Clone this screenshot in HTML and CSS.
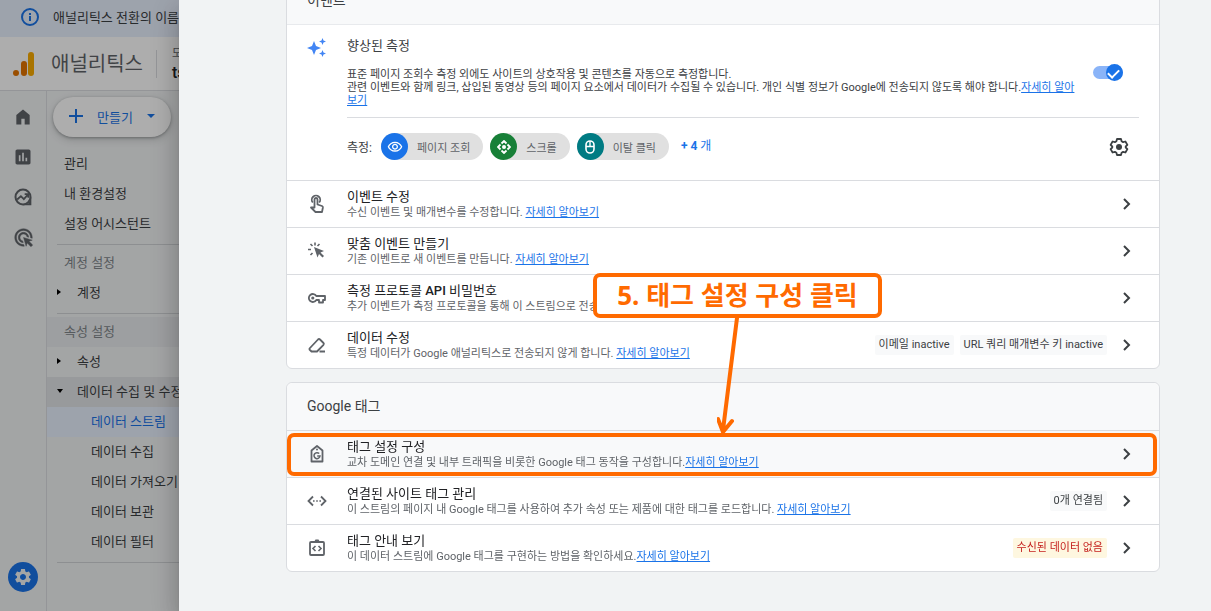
FILE: index.html
```html
<!DOCTYPE html>
<html lang="ko">
<head>
  <meta charset="UTF-8">
  <meta name="viewport" content="width=device-width, initial-scale=1">
  <title>애널리틱스</title>
  <link rel="stylesheet" href="styles.css">
</head>
<body>

  <svg class="defs" width="0" height="0" aria-hidden="true">
    <symbol id="chevron" viewBox="0 0 20 20">
      <path d="M7 5l5 5-5 5" fill="none" stroke="currentColor" stroke-width="2"/>
    </symbol>
    <symbol id="gear" viewBox="0 0 24 24">
      <path fill="currentColor" d="M19.14 12.94c.04-.3.06-.61.06-.94 0-.32-.02-.64-.07-.94l2.03-1.58c.18-.14.23-.41.12-.61l-1.92-3.32c-.12-.22-.37-.29-.59-.22l-2.39.96c-.5-.38-1.03-.7-1.62-.94l-.36-2.54c-.04-.24-.24-.41-.48-.41h-3.84c-.24 0-.43.17-.47.41l-.36 2.54c-.59.24-1.13.57-1.62.94l-2.39-.96c-.22-.08-.47 0-.59.22L2.74 8.87c-.12.21-.08.47.12.61l2.03 1.58c-.05.3-.09.63-.09.94s.02.64.07.94l-2.03 1.58c-.18.14-.23.41-.12.61l1.92 3.32c.12.22.37.29.59.22l2.39-.96c.5.38 1.03.7 1.62.94l.36 2.54c.05.24.24.41.48.41h3.84c.24 0 .44-.17.47-.41l.36-2.54c.59-.24 1.13-.56 1.62-.94l2.39.96c.22.08.47 0 .59-.22l1.92-3.32c.12-.22.07-.47-.12-.61l-2.01-1.58zM12 15.6c-1.98 0-3.6-1.62-3.6-3.6s1.62-3.6 3.6-3.6 3.6 1.62 3.6 3.6-1.62 3.6-3.6 3.6z"/>
    </symbol>
  </svg>

  <div class="app">
    <div class="banner">
      <svg width="18" height="18" viewBox="0 0 18 18"><circle cx="9" cy="9" r="8" fill="none" stroke="#1a73e8" stroke-width="2"/><path d="M8 8h2v5H8zM8 5h2v2H8z" fill="#1a73e8"/></svg>
      <span>애널리틱스 전환의 이름이 변경되었습니다</span>
    </div>

    <header class="topbar">
      <svg width="22" height="26" viewBox="0 0 22 26">
        <rect x="15" y="1" width="6" height="24" rx="3" fill="#f9ab00"/>
        <rect x="8" y="10" width="6" height="15" rx="3" fill="#e37400"/>
        <circle cx="3" cy="22" r="3" fill="#e37400"/>
      </svg>
      <span class="brand">애널리틱스</span>
      <div class="account">
        <small>모든 계정</small>
        <strong>tsmarketing</strong>
      </div>
    </header>

    <div class="main">
      <nav class="rail" aria-label="주 메뉴">
        <a href="#" aria-label="홈"><svg width="20" height="20" viewBox="0 0 24 24"><path fill="currentColor" d="M4 21V9.500l8-6.500 8 6.500V21h-6v-7h-4v7z"/></svg></a>
        <a href="#" aria-label="보고서"><svg width="20" height="20" viewBox="0 0 24 24"><path fill="currentColor" d="M19 3H5c-1.100 0-2 .9-2 2v14c0 1.100.9 2 2 2h14c1.100 0 2-.9 2-2V5c0-1.100-.9-2-2-2zM9 17H7v-7h2v7zm4 0h-2V7h2v10zm4 0h-2v-4h2v4z"/></svg></a>
        <a href="#" aria-label="탐색"><svg width="20" height="20" viewBox="0 0 24 24"><path fill="currentColor" d="M14 20h8v2H12z M22 12v10h-5l3-5z"/><circle cx="12" cy="12" r="9" fill="none" stroke="currentColor" stroke-width="2.400"/><path d="M5 15l4.500-4 3.500 3.500L18 9M14 8.500h4.500V13" fill="none" stroke="currentColor" stroke-width="2.200"/></svg></a>
        <a href="#" aria-label="광고"><svg width="21" height="21" viewBox="0 0 24 24"><path fill="currentColor" stroke="currentColor" stroke-width=".5" d="M11.710 17.990C8.530 17.840 6 15.220 6 12c0-3.310 2.690-6 6-6 3.220 0 5.840 2.530 5.990 5.710l-2.100-.63C15.480 9.310 13.890 8 12 8c-2.210 0-4 1.790-4 4 0 1.890 1.310 3.480 3.080 3.890l.63 2.100zM22 12c0 .3-.01.6-.04.9l-1.970-.59c.01-.1.01-.21.01-.31 0-4.420-3.580-8-8-8s-8 3.580-8 8 3.580 8 8 8c.1 0 .21 0 .31-.01l.59 1.970c-.3.03-.6.04-.9.04-5.520 0-10-4.480-10-10S6.480 2 12 2s10 4.480 10 10zm-3.770 4.260L22 15l-10-3 3 10 1.260-3.770 4.270 4.270 1.980-1.980-4.280-4.260z"/></svg></a>
        <a href="#" class="admin" aria-label="관리"><svg width="20" height="20"><use href="#gear"/></svg></a>
      </nav>

      <nav class="menu" aria-label="관리 메뉴">
        <button class="create" type="button">
          <svg width="14" height="14" viewBox="0 0 14 14"><path d="M7 0v14M0 7h14" stroke="currentColor" stroke-width="2"/></svg>
          만들기
          <svg width="8" height="4" viewBox="0 0 8 4"><path d="M0 0h8L4 4z" fill="currentColor"/></svg>
        </button>
        <a href="#">관리</a>
        <a href="#">내 환경설정</a>
        <a href="#">설정 어시스턴트</a>
        <hr>
        <h3>계정 설정</h3>
        <a href="#" class="group"><svg width="4" height="6" viewBox="0 0 4 6"><path d="M0 0l4 3-4 3z"/></svg>계정</a>
        <hr>
        <h3 class="shade">속성 설정</h3>
        <a href="#" class="group"><svg width="4" height="6" viewBox="0 0 4 6"><path d="M0 0l4 3-4 3z"/></svg>속성</a>
        <a href="#" class="group open"><svg width="6" height="4" viewBox="0 0 6 4"><path d="M0 0h6L3 4z"/></svg>데이터 수집 및 수정</a>
        <a href="#" class="sub active">데이터 스트림</a>
        <a href="#" class="sub">데이터 수집</a>
        <a href="#" class="sub">데이터 가져오기</a>
        <a href="#" class="sub">데이터 보관</a>
        <a href="#" class="sub">데이터 필터</a>
        <hr>
      </nav>
    </div>
  </div>

  <div class="scrim"></div>

  <main class="drawer">
    <div class="content">

      <section class="card">
        <h2>이벤트</h2>

        <div class="enhanced">
          <svg class="row-icon sparkle" width="20" height="20" viewBox="0 0 20 20"><path fill="#4285f4" d="M7 3l2 5 5 2-5 2-2 5-2-5-5-2 5-2zM15.500 0l1 2.500L19 3.500l-2.500 1-1 2.500-1-2.500-2.500-1 2.500-1zM15.500 12l1 2.500 2.500 1-2.500 1-1 2.500-1-2.500-2.500-1 2.500-1z"/></svg>
          <div class="enhanced-body">
            <h3>향상된 측정</h3>
            <div class="about">
              <p>표준 페이지 조회수 측정 외에도 사이트의 상호작용 및 콘텐츠를 자동으로 측정합니다.<br>관련 이벤트와 함께 링크, 삽입된 동영상 등의 페이지 요소에서 데이터가 수집될 수 있습니다. 개인 식별 정보가 Google에 전송되지 않도록 해야 합니다.<a href="#">자세히 알아보기</a></p>
              <input class="toggle" type="checkbox" aria-label="향상된 측정" checked>
            </div>
            <div class="measures">
              <span class="measures-label">측정:</span>
              <span class="chip">
                <i class="blue"><svg width="16" height="16" viewBox="0 0 24 24"><path fill="#fff" d="M12 6c3.790 0 7.170 2.130 8.820 5.500C19.170 14.870 15.790 17 12 17s-7.170-2.130-8.820-5.500C4.830 8.130 8.210 6 12 6m0-2C7 4 2.730 7.110 1 11.500 2.730 15.890 7 19 12 19s9.270-3.110 11-7.500C21.270 7.110 17 4 12 4zm0 5c1.380 0 2.500 1.120 2.500 2.500S13.380 14 12 14s-2.500-1.120-2.500-2.500S10.620 9 12 9m0-2c-2.480 0-4.500 2.020-4.500 4.500S9.520 16 12 16s4.500-2.020 4.500-4.500S14.480 7 12 7z"/></svg></i>
                페이지 조회
              </span>
              <span class="chip">
                <i class="green"><svg width="14" height="14" viewBox="0 0 14 14"><path d="M4.500 3.500L7 1l2.500 2.500M10.500 4.500L13 7l-2.500 2.500M9.500 10.500L7 13l-2.500-2.500M3.500 9.500L1 7l2.500-2.500" fill="none" stroke="#fff" stroke-width="1.800"/><circle cx="7" cy="7" r="2" fill="#fff"/></svg></i>
                스크롤
              </span>
              <span class="chip">
                <i class="teal"><svg width="12" height="14" viewBox="0 0 12 14"><rect x="2" y="1" width="8" height="12" rx="4" fill="none" stroke="#fff" stroke-width="1.600"/><path d="M2 6.500h8M6 1v5.500" stroke="#fff" stroke-width="1.400"/></svg></i>
                이탈 클릭
              </span>
              <a class="more" href="#"><b>+ 4</b> 개</a>
              <button class="icon-btn settings" type="button" aria-label="설정">
                <svg width="20" height="20" viewBox="0 0 20 20"><path d="M8 2h4l.6 2.300 1.500.9 2.300-.7 2 3.400L16.700 9.500v1l1.700 1.600-2 3.400-2.300-.7-1.500.9L12 18H8l-.6-2.300-1.500-.9-2.300.7-2-3.400 1.700-1.600v-1L1.600 7.900l2-3.400 2.300.7 1.500-.9z" fill="none" stroke="currentColor" stroke-width="1.800" stroke-linejoin="round"/><circle cx="10" cy="10" r="3" fill="currentColor"/></svg>
              </button>
            </div>
          </div>
        </div>

        <div class="row">
          <svg class="row-icon" width="20" height="20" viewBox="0 0 20 20"><g fill="none" stroke="currentColor" stroke-width="1.800" stroke-linejoin="round"><path d="M5.800 8.500a4.200 4.200 0 1 1 6.400 0"/><path d="M7.500 13.500V5.500a1.500 1.500 0 0 1 3 0v5l4.500 1.500c.7.3 1 .8.900 1.500L15 18H8.500L4 13.500z"/></g></svg>
          <div class="row-text">
            <h3>이벤트 수정</h3>
            <p>수신 이벤트 및 매개변수를 수정합니다. <a href="#">자세히 알아보기</a></p>
          </div>
          <button class="icon-btn" type="button" aria-label="이벤트 수정 열기"><svg width="20" height="20"><use href="#chevron"/></svg></button>
        </div>

        <div class="row">
          <svg class="row-icon" width="20" height="20" viewBox="0 0 20 20"><path d="M7 6l10 4-3.500 1.500 3.500 3.500-1.500 1.500-3.500-3.500-1.500 3.500z" fill="currentColor"/><path d="M8 1.500v3M3.500 3l2 2M12.500 3l-2 2M1 8.500h3M3.500 14l2-2" stroke="currentColor" stroke-width="1.600"/></svg>
          <div class="row-text">
            <h3>맞춤 이벤트 만들기</h3>
            <p>기존 이벤트로 새 이벤트를 만듭니다. <a href="#">자세히 알아보기</a></p>
          </div>
          <button class="icon-btn" type="button" aria-label="맞춤 이벤트 만들기 열기"><svg width="20" height="20"><use href="#chevron"/></svg></button>
        </div>

        <div class="row">
          <svg class="row-icon" width="20" height="20" viewBox="0 0 20 20"><path d="M9.300 8A4 4 0 1 0 9.300 12H12v2.500h4V12h2V8z" fill="none" stroke="currentColor" stroke-width="1.800" stroke-linejoin="round"/><circle cx="5.800" cy="10" r="1.600" fill="currentColor"/></svg>
          <div class="row-text">
            <h3>측정 프로토콜 <b>API</b> 비밀번호</h3>
            <p>추가 이벤트가 측정 프로토콜을 통해 이 스트림으로 전송</p>
          </div>
          <button class="icon-btn" type="button" aria-label="측정 프로토콜 API 비밀번호 열기"><svg width="20" height="20"><use href="#chevron"/></svg></button>
        </div>

        <div class="row">
          <svg class="row-icon" width="20" height="20" viewBox="0 0 20 20"><path d="M2.500 13.500l8.500-9q1-1 2 0l3.500 3.500q.8.8 0 1.800L10 16.500H4.500L2.500 14.500z" fill="none" stroke="currentColor" stroke-width="1.800" stroke-linejoin="round"/><path d="M12.500 16.500H18" stroke="currentColor" stroke-width="2"/></svg>
          <div class="row-text">
            <h3>데이터 수정</h3>
            <p>특정 데이터가 Google 애널리틱스로 전송되지 않게 합니다. <a href="#">자세히 알아보기</a></p>
          </div>
          <span class="tag">이메일 inactive</span>
          <span class="tag">URL 쿼리 매개변수 키 inactive</span>
          <button class="icon-btn" type="button" aria-label="데이터 수정 열기"><svg width="20" height="20"><use href="#chevron"/></svg></button>
        </div>
      </section>

      <section class="card">
        <h2>Google 태그</h2>

        <div class="row target">
          <svg class="row-icon" width="20" height="20" viewBox="0 0 20 20"><path d="M4.500 17.500V6.500L10 2l5.500 4.500v11z" fill="none" stroke="currentColor" stroke-width="1.800" stroke-linejoin="round"/><circle cx="10" cy="5.500" r="1" fill="currentColor"/><path d="M12.200 9.600A3 3 0 1 0 13 12h-2.800" fill="none" stroke="currentColor" stroke-width="1.500"/></svg>
          <div class="row-text">
            <h3>태그 설정 구성</h3>
            <p>교차 도메인 연결 및 내부 트래픽을 비롯한 Google 태그 동작을 구성합니다.<a href="#">자세히 알아보기</a></p>
          </div>
          <button class="icon-btn" type="button" aria-label="태그 설정 구성 열기"><svg width="20" height="20"><use href="#chevron"/></svg></button>
          <div class="callout">
            <strong>5. 태그 설정 구성 클릭</strong>
            <svg width="24" height="118" viewBox="0 0 24 118"><path d="M20 0L6 112M1 101l5 13 9-11" fill="none" stroke="#ff6a00" stroke-width="4" stroke-linecap="round" stroke-linejoin="round"/></svg>
          </div>
        </div>

        <div class="row">
          <svg class="row-icon" width="20" height="20" viewBox="0 0 20 20"><path d="M6 5.500L1.500 10 6 14.500M14 5.500l4.500 4.500-4.500 4.500" fill="none" stroke="currentColor" stroke-width="1.800"/><path d="M6 9.200h1.600v1.600H6zM9.200 9.200h1.600v1.600H9.200zM12.400 9.200H14v1.600h-1.600z" fill="currentColor"/></svg>
          <div class="row-text">
            <h3>연결된 사이트 태그 관리</h3>
            <p>이 스트림의 페이지 내 Google 태그를 사용하여 추가 속성 또는 제품에 대한 태그를 로드합니다. <a href="#">자세히 알아보기</a></p>
          </div>
          <span class="tag">0개 연결됨</span>
          <button class="icon-btn" type="button" aria-label="연결된 사이트 태그 관리 열기"><svg width="20" height="20"><use href="#chevron"/></svg></button>
        </div>

        <div class="row">
          <svg class="row-icon" width="20" height="20" viewBox="0 0 20 20"><rect x="3" y="4" width="14" height="13" rx="1" fill="none" stroke="currentColor" stroke-width="1.800"/><path d="M7 4l1.500-2.500h3L13 4z" fill="currentColor"/><path d="M8.500 8L6 10.500 8.500 13M11.500 8l2.500 2.500-2.500 2.500" fill="none" stroke="currentColor" stroke-width="1.600"/></svg>
          <div class="row-text">
            <h3>태그 안내 보기</h3>
            <p>이 데이터 스트림에 Google 태그를 구현하는 방법을 확인하세요.<a href="#">자세히 알아보기</a></p>
          </div>
          <span class="tag warn">수신된 데이터 없음</span>
          <button class="icon-btn" type="button" aria-label="태그 안내 보기 열기"><svg width="20" height="20"><use href="#chevron"/></svg></button>
        </div>
      </section>

    </div>
  </main>

</body>
</html>
```

FILE: styles.css
```css
* {
  box-sizing: border-box;
}

html, body {
  height: 100%;
  margin: 0;
  overflow: hidden;
  font-family: Roboto, "Noto Sans CJK KR", sans-serif;
  font-size: 13px;
  color: #3c4043;
  background: #f1f3f4;
}

h2, h3, p {
  margin: 0;
  font-weight: 400;
}

a {
  color: #1a73e8;
}

svg {
  display: block;
  flex: none;
}

.defs {
  position: absolute;
}

/* page behind the drawer */
.app {
  display: flex;
  flex-direction: column;
  height: 100%;
  white-space: nowrap;
}

.banner {
  display: flex;
  align-items: center;
  gap: 14px;
  height: 37px;
  padding: 0 21px 4px;
  background: #e8f0fe;
}

.topbar {
  display: flex;
  align-items: center;
  height: 54px;
  padding-left: 13px;
  background: #fff;
  border-bottom: 1px solid #dadce0;
}

.brand {
  margin: 0 13px 2px 16px;
  font-size: 20px;
  color: #5f6368;
}

.account {
  display: flex;
  align-items: center;
  flex-wrap: wrap;
  width: 120px;
  padding-left: 15px;
  border-left: 1px solid #dadce0;
  height: 28px;
  align-content: center;
}

.account small {
  font-size: 11px;
  line-height: 18px;
  color: #5f6368;
}

.account strong {
  font-size: 16px;
  line-height: 20px;
  font-weight: 500;
  color: #202124;
}

.main {
  display: flex;
  flex: 1;
  min-height: 0;
}

.rail {
  display: flex;
  flex-direction: column;
  align-items: center;
  width: 47px;
  padding: 6px 0 19px;
  border-right: 1px solid #dadce0;
}

.rail a {
  display: flex;
  align-items: center;
  justify-content: center;
  width: 40px;
  height: 40px;
  color: #5f6368;
}

.rail .admin {
  width: 30px;
  height: 30px;
  margin-top: auto;
  border-radius: 50%;
  background: #1a73e8;
  color: #f1f3f4;
}

.menu {
  width: 240px;
  padding-top: 6px;
}

.create {
  display: flex;
  align-items: center;
  justify-content: space-between;
  width: 118px;
  height: 40px;
  margin: 0 0 12px 6px;
  padding: 0 16px 2px;
  border: none;
  border-radius: 20px;
  background: #fff;
  box-shadow: 0 1px 3px rgba(60, 64, 67, .4), 0 3px 8px rgba(60, 64, 67, .2);
  font: inherit;
  color: #1a73e8;
}

.menu a,
.menu h3 {
  display: flex;
  align-items: center;
  height: 30px;
  padding: 0 0 3px 17px;
  font-size: 13px;
  color: #3c4043;
  text-decoration: none;
}

.menu h3 {
  color: #80868b;
}

.menu hr {
  margin: 5px 0 3px 10px;
  border: none;
  border-top: 1px solid #d0d3d6;
}

.menu .shade {
  background: #e8eaed;
}

.menu .group {
  padding-left: 10px;
}

.menu .group svg {
  margin-right: 16px;
}

.menu .open {
  background: #e1e3e6;
}

.menu .open svg {
  margin-right: 14px;
}

.menu .sub {
  padding-left: 44px;
}

.menu .active {
  background: #e8f0fe;
  color: #1a73e8;
}

.scrim {
  position: fixed;
  inset: 0;
  background: rgba(0, 0, 0, .32);
}

/* drawer */
.drawer {
  position: fixed;
  inset: 0 0 0 179px;
  overflow: hidden;
  background: #f1f3f4;
  box-shadow: 0 8px 10px -5px rgba(0, 0, 0, .2), 0 16px 24px 2px rgba(0, 0, 0, .14), 0 6px 30px 5px rgba(0, 0, 0, .12);
}

.content {
  display: flex;
  flex-direction: column;
  gap: 13px;
  margin-top: -24px;
  padding: 0 51px 0 107px;
}

.card {
  border: 1px solid #dadce0;
  border-radius: 6px;
  background: #fff;
}

.card h2 {
  height: 47px;
  padding-left: 20px;
  border-radius: 6px 6px 0 0;
  background: #f8f9fa;
  font-size: 14px;
  line-height: 46px;
}

.enhanced {
  display: flex;
  padding: 12px 20px 20px;
  border-top: 1px solid #e8eaed;
}

.row-icon {
  margin-right: 20px;
  color: #5f6368;
}

.sparkle {
  margin-top: 1px;
}

.enhanced-body {
  flex: 1;
}

.enhanced h3,
.row h3 {
  font-size: 13px;
  line-height: 18px;
}

.about {
  display: flex;
  align-items: flex-start;
  justify-content: space-between;
  padding: 13px 16px 10px 0;
  border-bottom: 1px solid #dadce0;
}

.about p {
  width: 736px;
  font-size: 11px;
  line-height: 13px;
}

.toggle {
  position: relative;
  flex: none;
  width: 30px;
  height: 13px;
  margin: -2px 0 0;
  appearance: none;
  border-radius: 7px;
  background: #8ab4f8;
}

.toggle::before {
  content: "";
  position: absolute;
  top: -2px;
  right: 0;
  width: 17px;
  height: 17px;
  border-radius: 50%;
  background: #1a73e8;
}

.toggle::after {
  content: "";
  position: absolute;
  top: 1px;
  right: 6px;
  width: 5px;
  height: 9px;
  border: solid #fff;
  border-width: 0 2px 2px 0;
  transform: rotate(45deg);
}

.measures {
  display: flex;
  align-items: center;
  gap: 7px;
  padding-top: 15px;
}

.measures-label {
  margin-right: 2px;
  font-size: 12px;
}

.chip {
  display: flex;
  align-items: center;
  gap: 9px;
  height: 27px;
  padding-right: 13px;
  border-radius: 14px;
  background: #e0e0e0;
  font-size: 11px;
  color: #5f6368;
}

.chip i {
  display: flex;
  align-items: center;
  justify-content: center;
  width: 27px;
  height: 27px;
  border-radius: 50%;
}

.blue {
  background: #1a73e8;
}

.green {
  background: #188038;
}

.teal {
  background: #007b83;
}

.more {
  margin-left: 5px;
  padding-bottom: 4px;
  font-size: 12px;
  text-decoration: none;
}

.icon-btn {
  flex: none;
  padding: 0;
  border: none;
  background: none;
  color: #3c4043;
}

.settings {
  margin: 0 10px 0 auto;
}

.row {
  display: flex;
  align-items: center;
  height: 47px;
  padding: 0 22px 0 20px;
  border-top: 1px solid #dadce0;
}

.row-text {
  flex: 1;
  white-space: nowrap;
}

.row h3 {
  line-height: 16px;
  color: #202124;
}

.row b {
  font-weight: 500;
}

.row p {
  margin-top: 1px;
  font-size: 11px;
  line-height: 14px;
  color: #5f6368;
}

.tag {
  margin-left: 6px;
  padding: 0 4px;
  border-radius: 2px;
  background: #f8f9fa;
  font-size: 11px;
  line-height: 20px;
}

.tag + .icon-btn {
  margin-left: 10px;
}

.warn {
  background: #fef7e0;
  color: #c5221f;
}

/* step marker over the row to click */
.target {
  position: relative;
  background: #f8f9fa;
}

.target::after {
  content: "";
  position: absolute;
  inset: 2px 2px 1px 0;
  border: 4px solid #ff6a00;
  border-radius: 7px;
  pointer-events: none;
}

.callout {
  position: absolute;
  left: 306px;
  bottom: 41px;
  z-index: 1;
}

.callout strong {
  display: block;
  width: 289px;
  border: 4px solid #ff6a00;
  border-radius: 7px;
  background: #fff;
  font-family: "Noto Sans", "Noto Sans CJK KR", sans-serif;
  font-size: 26px;
  line-height: 37px;
  text-align: center;
  white-space: nowrap;
  color: #ff6a00;
}

.callout svg {
  margin-left: 124px;
}
```
